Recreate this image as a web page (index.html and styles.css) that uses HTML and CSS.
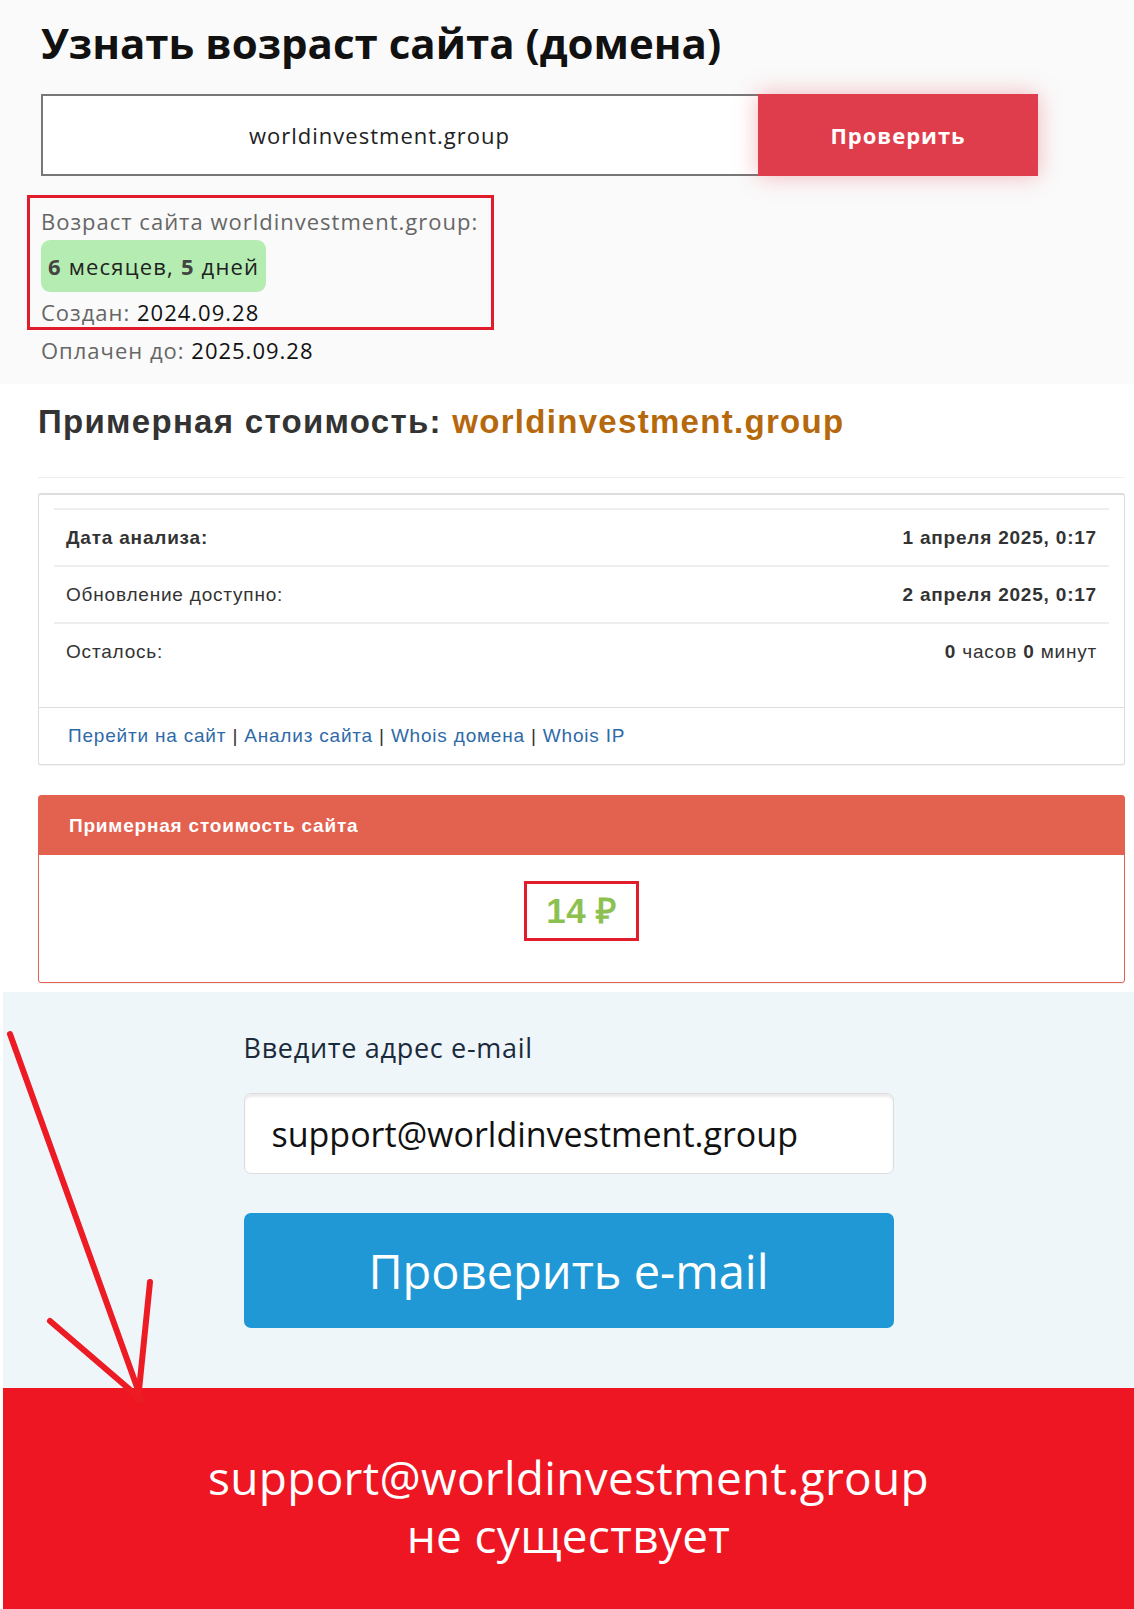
FILE: index.html
```html
<!DOCTYPE html>
<html lang="ru">
<head>
  <meta charset="UTF-8">
  <meta name="viewport" content="width=device-width, initial-scale=1">
  <title>Узнать возраст сайта</title>
  <link rel="stylesheet" href="styles.css">
</head>
<body>

<section class="age-section">
  <h1 class="age-title">Узнать возраст сайта (домена)</h1>
  <form class="age-form" onsubmit="return false">
    <div class="age-input">worldinvestment.group</div>
    <button class="age-button">Проверить</button>
  </form>

  <div class="age-result mark">
    <div class="age-line">Возраст сайта worldinvestment.group:</div>
    <div class="age-pill"><b>6</b> месяцев, <b>5</b> дней</div>
    <div class="age-line">Создан: <span class="age-value">2024.09.28</span></div>
  </div>
  <div class="age-line age-paid">Оплачен до: <span class="age-value">2025.09.28</span></div>
</section>

<section class="cost-section">
  <h2 class="cost-title">Примерная стоимость: <span class="cost-domain">worldinvestment.group</span></h2>
  <hr class="cost-rule">

  <div class="panel">
    <div class="panel-body">
      <table class="info-table">
        <tr>
          <td><b>Дата анализа:</b></td>
          <td class="right"><b>1 апреля 2025, 0:17</b></td>
        </tr>
        <tr>
          <td>Обновление доступно:</td>
          <td class="right"><b>2 апреля 2025, 0:17</b></td>
        </tr>
        <tr>
          <td>Осталось:</td>
          <td class="right"><b>0</b> часов <b>0</b> минут</td>
        </tr>
      </table>
    </div>
    <div class="panel-footer">
      <a href="#">Перейти на сайт</a> | <a href="#">Анализ сайта</a> | <a href="#">Whois домена</a> | <a href="#">Whois IP</a>
    </div>
  </div>

  <div class="panel panel-danger">
    <div class="panel-heading">Примерная стоимость сайта</div>
    <div class="panel-price">
      <span class="price mark">14 ₽</span>
    </div>
  </div>
</section>

<div class="mail-wrap">
  <section class="mail-section">
    <div class="mail-form">
      <label class="mail-label">Введите адрес e-mail</label>
      <div class="mail-input">support@worldinvestment.group</div>
      <button class="mail-button">Проверить e-mail</button>
    </div>
  </section>

  <section class="mail-result">
    <p>support@worldinvestment.group<br>не существует</p>
  </section>

  <svg class="arrow" width="170" height="430" viewBox="0 0 170 430">
    <g stroke="#ec1b24" stroke-width="6" stroke-linecap="round" fill="none">
      <line x1="7" y1="42" x2="139" y2="409"/>
      <line x1="47" y1="329" x2="139" y2="408"/>
      <line x1="147" y1="290" x2="135" y2="408"/>
    </g>
  </svg>
</div>

</body>
</html>
```

FILE: styles.css
```css
body {
  margin: 0;
  padding: 0;
  background: #fff;
}

/* top: domain age */
.age-section {
  background: #fafafa;
  padding: 19px 41px 19px;
  font-family: 'Open Sans', sans-serif;
}

.age-title {
  margin: 0 0 27px;
  font-size: 42px;
  line-height: 48px;
  font-weight: 700;
  color: #111;
}

.age-form {
  display: flex;
  width: 997px;
  height: 82px;
}

.age-input {
  flex: 1;
  box-sizing: border-box;
  background: #fff;
  border: 2px solid #777;
  border-right: none;
  display: flex;
  align-items: center;
  justify-content: center;
  padding-right: 42px;
  font-size: 22px;
  letter-spacing: 1px;
  color: #222;
}

.age-button {
  width: 280px;
  border: none;
  background: #df3d4b;
  color: #fff;
  font-family: 'Open Sans', sans-serif;
  font-weight: 700;
  font-size: 22px;
  letter-spacing: 1px;
  box-shadow: 0 0 22px rgba(232, 60, 75, 0.35);
  cursor: pointer;
}

.mark {
  border: 3px solid #e21d2b;
}

.age-result {
  display: inline-block;
  margin: 19px 0 0 -14px;
  padding: 8px 13px 0 11px;
}

.age-line {
  font-size: 22px;
  letter-spacing: 1px;
  line-height: 30px;
  color: #666;
}

.age-value {
  color: #111;
}

.age-pill {
  display: inline-block;
  margin: 4px 0 5px;
  padding: 0 7px;
  height: 52px;
  line-height: 52px;
  background: #b4ecb1;
  border-radius: 9px;
  font-size: 22px;
  letter-spacing: 1.2px;
  color: #222;
}

.age-pill b {
  color: #444;
}

.age-paid {
  margin-top: 5px;
}

/* middle: estimated cost */
.cost-section {
  padding: 18px 9px 9px 38px;
  font-family: 'Liberation Sans', Arial, sans-serif;
}

.cost-title {
  margin: 0;
  font-size: 33px;
  letter-spacing: 1.3px;
  line-height: 40px;
  color: #333;
}

.cost-domain {
  color: #b5680c;
}

.cost-rule {
  margin: 35px 0 15px;
  border: none;
  border-top: 1px solid #eee;
}

.panel {
  border: 1px solid #ddd;
  border-top-width: 2px;
  border-radius: 3px;
  background: #fff;
  box-shadow: 0 1px 1px rgba(0, 0, 0, 0.05);
}

.panel-body {
  padding: 13px 15px 28px;
}

.info-table {
  width: 100%;
  border-collapse: collapse;
  font-size: 19px;
  letter-spacing: 0.8px;
  color: #333;
}

.info-table td {
  padding: 18px 12px 17px;
  line-height: 20px;
  border-top: 2px solid #eee;
}

.info-table .right {
  text-align: right;
}

.panel-footer {
  border-top: 1px solid #ddd;
  padding: 17px 29px 18px;
  font-size: 19px;
  letter-spacing: 0.8px;
  line-height: 21px;
  color: #333;
}

.panel-footer a {
  color: #2f6aa8;
  text-decoration: none;
}

.panel-danger {
  margin-top: 30px;
  border: 1px solid #e46150;
}

.panel-heading {
  background: #e3614f;
  color: #fff;
  font-weight: 700;
  font-size: 19px;
  letter-spacing: 0.8px;
  line-height: 59px;
  padding: 0 30px;
}

.panel-price {
  text-align: center;
  padding: 26px 0 41px;
}

.price {
  display: inline-block;
  padding: 0 19px;
  line-height: 54px;
  font-size: 35px;
  font-weight: 700;
  letter-spacing: 0.5px;
  color: #8cc152;
}

/* bottom: email check */
.mail-wrap {
  position: relative;
  margin-left: 3px;
  font-family: 'Open Sans', sans-serif;
}

.mail-section {
  background: #eef6fa;
  padding: 40px 0 60px;
}

.mail-form {
  width: 650px;
  margin: 0 auto;
}

.mail-label {
  display: block;
  font-size: 27px;
  letter-spacing: 0.7px;
  line-height: 32px;
  color: #1a2a3a;
}

.mail-input {
  box-sizing: border-box;
  margin-top: 29px;
  height: 81px;
  padding: 0 27px;
  display: flex;
  align-items: center;
  background: #fff;
  border: 1px solid #ddd;
  border-radius: 7px;
  box-shadow: inset 0 3px 2px rgba(0, 0, 0, 0.08);
  font-size: 34px;
  color: #111;
}

.mail-button {
  display: block;
  width: 100%;
  height: 115px;
  margin-top: 39px;
  border: none;
  border-radius: 7px;
  background: #1f98d5;
  color: #fff;
  font-family: 'Open Sans', sans-serif;
  font-size: 47px;
  cursor: pointer;
}

.mail-result {
  background: #ee1623;
  color: #fff;
  text-align: center;
  padding: 60px 0 46px;
}

.mail-result p {
  margin: 0;
  font-size: 46px;
  letter-spacing: 0.3px;
  line-height: 58px;
}

.arrow {
  position: absolute;
  left: 0;
  top: 0;
}
```
